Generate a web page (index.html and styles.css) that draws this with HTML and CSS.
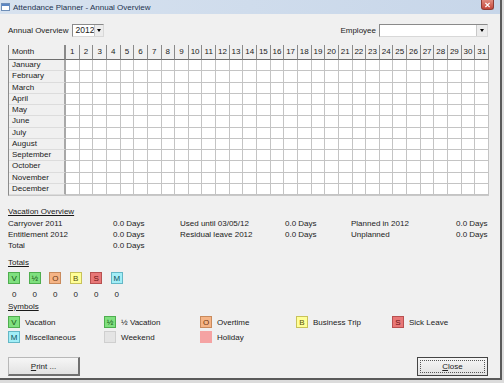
FILE: index.html
```html
<!DOCTYPE html>
<html lang="en">
<head>
  <meta charset="UTF-8" />
  <title>Attendance Planner - Annual Overview</title>
  <link rel="stylesheet" href="styles.css">
</head>
<body>
  <div class="window">
    <!-- Title bar -->
    <div class="titlebar">
      <svg class="app-icon" width="9" height="8" viewBox="0 0 9 8">
        <rect x="0.5" y="0.5" width="8" height="7" fill="#fff" stroke="#6f8fb8"/>
        <rect x="1" y="1" width="7" height="2" fill="#5b86c4"/>
      </svg>
      <span class="title">Attendance Planner - Annual Overview</span>
      <span class="close-x">
        <svg width="13" height="10" viewBox="0 0 13 10">
          <path d="M4 2.5 L9 7.5 M9 2.5 L4 7.5" stroke="#fff" stroke-width="1.6"/>
        </svg>
      </span>
    </div>

    <div class="content">
      <!-- Filters -->
      <div class="toolbar">
        <span class="label">Annual Overview</span>
        <div class="combo combo-year">
          <span class="combo-value">2012</span>
          <span class="combo-btn"><span class="tri"></span></span>
        </div>
        <span class="label label-employee">Employee</span>
        <div class="combo combo-employee">
          <span class="combo-value"></span>
          <span class="combo-btn"><span class="tri"></span></span>
        </div>
      </div>

      <!-- Calendar grid -->
      <div id="calendar" class="calendar"></div>

      <!-- Vacation Overview -->
      <div class="section-title">Vacation Overview</div>
      <div class="overview">
        <span>Carryover 2011</span><span>0.0 Days</span>
        <span>Used until 03/05/12</span><span>0.0 Days</span>
        <span>Planned in 2012</span><span>0.0 Days</span>
        <span>Entitlement 2012</span><span>0.0 Days</span>
        <span>Residual leave 2012</span><span>0.0 Days</span>
        <span>Unplanned</span><span>0.0 Days</span>
        <span>Total</span><span>0.0 Days</span>
      </div>

      <!-- Totals -->
      <div class="section-title totals-title">Totals</div>
      <div class="totals">
        <div class="total"><span class="sym sym-v">V</span><span class="count">0</span></div>
        <div class="total"><span class="sym sym-v">½</span><span class="count">0</span></div>
        <div class="total"><span class="sym sym-o">O</span><span class="count">0</span></div>
        <div class="total"><span class="sym sym-b">B</span><span class="count">0</span></div>
        <div class="total"><span class="sym sym-s">S</span><span class="count">0</span></div>
        <div class="total"><span class="sym sym-m">M</span><span class="count">0</span></div>
      </div>

      <!-- Symbols legend -->
      <div class="section-title symbols-title">Symbols</div>
      <div class="symbols">
        <div class="legend"><span class="sym sym-v">V</span>Vacation</div>
        <div class="legend"><span class="sym sym-v">½</span>½ Vacation</div>
        <div class="legend"><span class="sym sym-o">O</span>Overtime</div>
        <div class="legend"><span class="sym sym-b">B</span>Business Trip</div>
        <div class="legend"><span class="sym sym-s">S</span>Sick Leave</div>
        <div class="legend"><span class="sym sym-m">M</span>Miscellaneous</div>
        <div class="legend"><span class="sym sym-weekend"></span>Weekend</div>
        <div class="legend"><span class="sym sym-holiday"></span>Holiday</div>
      </div>

      <div class="buttons">
        <button class="btn"><u>P</u>rint ...</button>
        <button class="btn btn-default"><span class="focus"><u>C</u>lose</span></button>
      </div>
    </div>
  </div>

  <script>
    const months = ['January', 'February', 'March', 'April', 'May', 'June', 'July',
      'August', 'September', 'October', 'November', 'December'];
    const cal = document.getElementById('calendar');

    function cell(cls, text) {
      const d = document.createElement('div');
      d.className = cls;
      d.textContent = text || '';
      cal.appendChild(d);
    }

    cell('hd hd-month', 'Month');
    for (let i = 1; i <= 31; i++) cell('hd', i);
    months.forEach(m => {
      cell('month', m);
      for (let i = 1; i <= 31; i++) cell('day');
    });
  </script>
</body>
</html>
```

FILE: styles.css
```css
* { box-sizing: border-box; }
body {
  margin: 0;
  width: 504px;
  height: 383px;
  background: #dcdcdc;
  font-family: 'Liberation Sans', Arial, sans-serif;
  font-size: 8px;
  line-height: 11px;
  color: #222;
  overflow: hidden;
}
.window {
  width: 502px;
  height: 380px;
  background: #f0f0f0;
  border-right: 2px solid #5a5a5a;
  border-bottom: 2px solid #5a5a5a;
}
.titlebar {
  height: 14px;
  display: flex;
  align-items: center;
  background: linear-gradient(to right, #d7e2ef, #c7d6e9);
  color: #1e3450;
  position: relative;
}
.app-icon { margin: 0 3px 0 1px; }
.title { font-size: 8px; }
.close-x {
  position: absolute;
  right: 6px;
  top: 0;
  width: 13px;
  height: 10px;
  background: linear-gradient(#e08b7f, #c4463a);
  border: 1px solid #8f3c35;
  border-top: none;
  border-radius: 0 0 3px 3px;
  display: flex;
}
.content { padding: 10px 12px 0 8px; }

/* filters */
.toolbar {
  display: flex;
  align-items: center;
  height: 13px;
}
.label { margin-right: 4px; }
.label-employee { margin-left: auto; margin-right: 3px; }
.combo {
  height: 13px;
  display: flex;
  background: #fff;
  border: 1px solid #8a8a8a;
  border-right-color: #d8d8d8;
  border-bottom-color: #d8d8d8;
}
.combo-year { width: 32px; }
.combo-employee { width: 109px; }
.combo-value { flex: 1; padding-left: 2px; line-height: 11px; font-size: 8.5px; }
.combo-btn {
  width: 11px;
  background: #ececec;
  border-left: 1px solid #c8c8c8;
  display: flex;
  align-items: center;
  justify-content: center;
}
.tri {
  width: 0;
  height: 0;
  border-left: 2.5px solid transparent;
  border-right: 2.5px solid transparent;
  border-top: 3px solid #000;
}

/* calendar */
.calendar {
  margin-top: 8px;
  width: 481px;
  display: grid;
  grid-template-columns: 57px repeat(31, 1fr);
  grid-template-rows: 15px repeat(12, 11.25px);
  border-left: 1px solid #8c8c8c;
  border-bottom: 1px solid #c8c8c8;
  background: #fff;
}
.hd {
  background: #f0f0f0;
  border-right: 1px solid #8a8a8a;
  border-bottom: 1px solid #6e6e6e;
  text-align: center;
  line-height: 14px;
}
.hd-month {
  text-align: left;
  padding-left: 3px;
  border-right: 2px solid #8a8a8a;
}
.month {
  background: #f0f0f0;
  padding-left: 3px;
  line-height: 10px;
  border-right: 2px solid #a8a8a8;
  border-bottom: 1px solid #dcdcdc;
}
.day {
  border-right: 1px solid #c4c4c4;
  border-bottom: 1px solid #c4c4c4;
}

/* sections */
.section-title {
  margin-top: 10px;
  text-decoration: underline;
  color: #1a1a1a;
}
.overview {
  margin-top: 1px;
  display: grid;
  grid-template-columns: 105px 67px 105px 66px 105px auto;
}
.totals-title { margin-top: 6px; }
.totals {
  display: flex;
  gap: 8px;
  margin-top: 4px;
}
.total {
  width: 12.5px;
  display: flex;
  flex-direction: column;
  align-items: center;
}
.total .count { margin-top: 5px; }
.sym {
  width: 12px;
  height: 12px;
  line-height: 11px;
  text-align: center;
  font-size: 8px;
  border: 1px solid;
  flex-shrink: 0;
}
.sym-v { background: #7fe07f; border-color: #4fae4f; color: #145214; }
.sym-o { background: #f5b486; border-color: #c98a5c; color: #6b3510; }
.sym-b { background: #ffff98; border-color: #c8c25a; color: #55520e; }
.sym-s { background: #e87777; border-color: #b85050; color: #6a1010; }
.sym-m { background: #a2eef7; border-color: #64b7c6; color: #104e5a; }
.sym-weekend { background: #e4e4e4; border-color: #cfcfcf; }
.sym-holiday { background: #f5a3a3; border-color: #f5a3a3; }

.symbols-title { margin-top: 1px; }
.symbols {
  margin-top: 4px;
  display: grid;
  grid-template-columns: repeat(5, 96px);
  row-gap: 3px;
}
.legend {
  display: flex;
  align-items: center;
  gap: 5px;
  height: 12px;
}

/* buttons */
.buttons {
  margin-top: 14px;
  display: flex;
  justify-content: space-between;
}
button {
  font-family: inherit;
  font-size: 8px;
  color: #222;
  height: 19px;
  padding: 0;
  cursor: pointer;
}
.btn {
  width: 72px;
  background: linear-gradient(#f6f6f6, #e2e2e2);
  border: 1px solid #b8b8b8;
  border-right: 2px solid #707070;
  border-bottom: 2px solid #707070;
}
.btn-default {
  width: 71px;
  border: 1px solid #444;
  padding: 2px;
}
.focus {
  display: block;
  height: 100%;
  line-height: 12px;
  border: 1px dotted #555;
}
```
